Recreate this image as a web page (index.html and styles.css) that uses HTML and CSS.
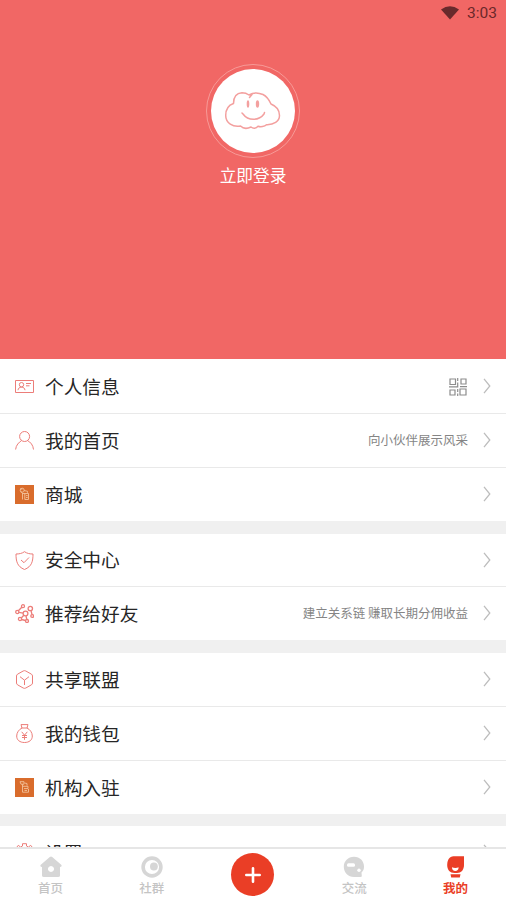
FILE: index.html
```html
<!DOCTYPE html>
<html lang="zh-CN">
<head>
<meta charset="utf-8">
<meta name="viewport" content="width=device-width, initial-scale=1">
<title>我的</title>
<link rel="stylesheet" href="styles.css">
</head>
<body>
<svg width="0" height="0" class="defs" aria-hidden="true">
  <symbol id="chevron" viewBox="0 0 8 16"><path d="M1 .8 6.8 8 1 15.2"/></symbol>
</svg>
<div class="app">
  <header class="hero">
    <div class="status">
      <svg width="20" height="14" viewBox="0 0 20 14"><path d="M1 3.400Q10-2.800 19 3.400L10 13.500Z" fill="#682a2c"/></svg>
      <span>3:03</span>
    </div>
    <div class="ring"><div class="avatar">
      <svg width="58" height="40" viewBox="0 0 58 40" fill="none" stroke="#f3a09f" stroke-width="1.500" stroke-linecap="round" stroke-linejoin="round">
        <path d="M9.500 12.500C9.500 5 13 2 18 1.700c3 0 5 .8 7 2.300 4-2.500 9-2.700 14-.5 4 2 6 5 8 9.500 5 2 8.500 6.500 8.500 11.500 0 6-6 9.500-13 9.200-2 2-6 2.500-8.500 1.500-2 2.500-5 2.500-7 .8-4 2-8 1.500-10.500-1C9 36.500 1.700 32 1.700 24.500 1.700 18 5 14 9.500 12.500ZM28 3.500l-2.500 3"/>
        <path d="M19 23c5 7 16 7 21 0M18 22l1 1M40.500 21.500 40 23"/>
        <g fill="#f3a09f" stroke="none"><ellipse cx="24" cy="13" rx="1.300" ry="3.700"/><ellipse cx="33.500" cy="13" rx="1.700" ry="3.700"/></g>
      </svg>
    </div></div>
    <div class="login">立即登录</div>
  </header>
  <main class="list">
    <section class="group">
      <div class="row">
        <svg class="icon" viewBox="0 0 19 19"><path d="M.5 3.500h18v12H.5ZM3 13.200c.2-2 1.500-3 3.500-3s3.300 1 3.500 3M11 6.500h5M11 8.800h3.500"/><circle cx="6.500" cy="7.700" r="2.200"/></svg>
        <span class="label">个人信息</span>
        <svg class="qr" width="18" height="18" viewBox="0 0 18 18"><path d="M1 1h5.500v5.500H1ZM12 1h5v5h-5ZM1 12h5v5H1ZM11 11h6v6h-6ZM8.700 0v3M8.700 4.500v4.300H0M8.700 11v3M8.700 15.500V18M18 8.700h-7"/></svg>
        <svg class="chev"><use href="#chevron"/></svg>
      </div>
      <div class="row">
        <svg class="icon" viewBox="0 0 19 19"><circle cx="9.600" cy="5.500" r="5"/><path d="M.6 18.500C1 14 4 11.300 6.500 9.600M12.500 9.600c3 1.500 5.600 4.400 6 8.900"/></svg>
        <span class="label">我的首页</span><span class="note">向小伙伴展示风采</span>
        <svg class="chev"><use href="#chevron"/></svg>
      </div>
      <div class="row">
        <svg class="icon shop" viewBox="0 0 19 19"><circle cx="7.200" cy="5.200" r="2"/><path d="M5 4h2.500M5.500 6.700l2 1.300v6.500M9 5.500l3.500.8v1.500M7.500 8.500h6v6H9.800v-6M11 10.600h1.700M11 12.500h1.700"/></svg>
        <span class="label">商城</span>
        <svg class="chev"><use href="#chevron"/></svg>
      </div>
    </section>
    <section class="group compact">
      <div class="row">
        <svg class="icon" viewBox="0 0 19 19"><path d="M9.500.7C7 2.500 4 3 1 3c0 7 1 12.500 8.500 15.500C17 15.500 18 10 18 3 15 3 12 2.500 9.500.7ZM6 9l3 2.700L14 6.500"/></svg>
        <span class="label">安全中心</span>
        <svg class="chev"><use href="#chevron"/></svg>
      </div>
      <div class="row">
        <svg class="icon dense" viewBox="0 0 19 19"><circle cx="10.500" cy="9.500" r="2.400"/><circle cx="2.300" cy="8" r="1.600"/><circle cx="8" cy="2.200" r="1.500"/><circle cx="15.300" cy="4.500" r="2.200"/><circle cx="17.200" cy="12" r="1.400"/><circle cx="5" cy="15" r="1.600"/><circle cx="12" cy="17" r="1.500"/><path d="m4 8.300 4 .8M3.300 6.800l3.500-3.600M16 6.700l1 3.800M6.300 14l2.500-2.700M6.500 15.500l4 1M11 12l.8 3.500"/></svg>
        <span class="label">推荐给好友</span><span class="note">建立关系链 赚取长期分佣收益</span>
        <svg class="chev"><use href="#chevron"/></svg>
      </div>
    </section>
    <section class="group">
      <div class="row">
        <svg class="icon" viewBox="0 0 19 19"><path d="M8.200 1Q9.500.3 10.800 1l5.700 3.200Q17.500 5 17.500 6v7q0 1-1 1.800L10.800 18q-1.300.7-2.600 0L2.500 14.800Q1.500 14 1.500 13V6q0-1 1-1.800ZM5 6.700l4.500 3.500L14 6.700M9.500 10.200V15"/></svg>
        <span class="label">共享联盟</span>
        <svg class="chev"><use href="#chevron"/></svg>
      </div>
      <div class="row">
        <svg class="icon" viewBox="0 0 19 19"><path d="M6 .6h7L12 4C15 5.500 17.300 8.500 17.300 12c0 4-3 6.500-7.800 6.500S1.700 16 1.700 12C1.700 8.500 4 5.500 7 4ZM6.500 4h6M6.700 7.800l2.800 3.400 2.800-3.400M9.500 11v4.800M7 11.500h5M7 13.500h5"/></svg>
        <span class="label">我的钱包</span>
        <svg class="chev"><use href="#chevron"/></svg>
      </div>
      <div class="row">
        <svg class="icon shop" viewBox="0 0 19 19"><path d="M5 3.700h4v2.500H6ZM7.500 6.200v8h6V11M9.500 5l2.500.5v2M7.500 8.300H13v2.300H9M9.500 12.500h2.500"/></svg>
        <span class="label">机构入驻</span>
        <svg class="chev"><use href="#chevron"/></svg>
      </div>
    </section>
    <section class="group">
      <div class="row">
        <svg class="icon" viewBox="0 0 19 19"><path d="M7.500 3V.7h4V3l2 1 2.200-1.700 2 2.500L16 7l.5 2h2v3h-2l-1 2.500 1.500 2-2 1.500-2-1-2 1v1h-4v-1l-2-1-2 1-2-2 1.500-2L2.500 12h-2V9h2L3 7 1.300 4.800l2-2.500L5.500 4Z"/><circle cx="9.500" cy="10" r="3"/></svg>
        <span class="label">设置</span>
        <svg class="chev"><use href="#chevron"/></svg>
      </div>
    </section>
  </main>
  <nav class="tabs">
    <div class="tab">
      <svg width="22" height="22" viewBox="0 0 22 22"><path fill-rule="evenodd" d="M9.800.9q1.200-1 2.400 0L21.500 9Q22 11 20 11v8.500q0 1.500-2 1.500H4q-2 0-2-1.500V11q-2 0-1.500-2ZM11 10a3 3 0 1 0 .01 0Z"/></svg>
      <span>首页</span>
    </div>
    <div class="tab">
      <svg width="22" height="22" viewBox="0 0 22 22"><circle cx="11" cy="11" r="8.900" fill="none" stroke="currentColor" stroke-width="3.600"/><circle cx="12.900" cy="10.500" r="3.900"/></svg>
      <span>社群</span>
    </div>
    <div class="tab"><div class="add"><svg width="16" height="16" viewBox="0 0 16 16"><path d="M8 1.300v13.400M1.300 8h13.400" stroke="#fff" stroke-width="2.600" stroke-linecap="round"/></svg></div></div>
    <div class="tab">
      <svg width="22" height="22" viewBox="0 0 22 22"><path d="M11 .7C17 .7 21 5 21 10.500c0 3-.7 4.500-2.500 6l.3 3.500q0 1-1.300 1H11C5 21 .8 16.500.8 10.800S5 .7 11 .7Z"/><rect x="4" y="7.300" width="8" height="3.400" rx="1.500" fill="#fff"/><circle cx="16" cy="14.200" r="1.700" fill="#fff"/></svg>
      <span>交流</span>
    </div>
    <div class="tab active">
      <svg width="22" height="22" viewBox="0 0 22 22"><path d="M9.500.3H20V9c0 5-3 8-7 8h-2.500c-4.500 0-7.300-3-7.300-8C3.200 4 5.500.3 9.500.3Z"/><path d="M8 11.200q1.500.8 3.300.8t3.300-.8c0 2.500-1.300 3.700-3.300 3.700S8 13.700 8 11.200Z" fill="#fff"/><path d="M6.500 18.200h10l-.7 3.300H7.200Z"/></svg>
      <span>我的</span>
    </div>
  </nav>
</div>
</body>
</html>
```

FILE: styles.css
```css
* { box-sizing: border-box; }
body {
  margin: 0;
  font-family: "Noto Sans CJK SC", sans-serif;
  color: #262626;
  background: #fff;
}
.defs { position: absolute; }
.app { display: flex; flex-direction: column; height: 900px; overflow: hidden; }

.hero {
  flex: none;
  height: 359px;
  background: #f16765;
  display: flex;
  flex-direction: column;
  align-items: center;
}
.status {
  align-self: stretch;
  height: 27px;
  padding-right: 9px;
  display: flex;
  justify-content: flex-end;
  align-items: center;
  gap: 7px;
  font: 400 15.500px/27px Roboto, sans-serif;
  color: #6b282a;
}
.status svg { margin-top: -2px; }
.ring {
  width: 94px;
  height: 94px;
  margin-top: 37px;
  padding: 4px;
  border: 1px solid #f79a97;
  border-radius: 50%;
}
.avatar {
  width: 84px;
  height: 84px;
  border-radius: 50%;
  background: #fff;
  display: flex;
  justify-content: center;
  align-items: center;
}
.login { margin-top: 5px; font-size: 16.700px; line-height: 24px; color: #fff; }

.list {
  flex: 1;
  min-height: 0;
  overflow: hidden;
  background: #f0f0f0;
  display: flex;
  flex-direction: column;
  gap: 13px;
}
.group { flex: none; background: #fff; }
.group:first-child { padding-top: 1px; }
.group:last-child { margin-top: -1px; }
.row {
  height: 54px;
  padding: 0 15px;
  display: flex;
  align-items: center;
  border-bottom: 1px solid #e9e9e9;
}
.row:last-child { height: 53px; border-bottom: 0; }
.compact .row { height: 53px; }
.icon { width: 19px; height: 19px; margin-right: 11px; fill: none; stroke: #ec7d79; stroke-width: 1; }
.icon.shop { background: #d96c2c; stroke: #f3c29c; stroke-width: .9; }
.icon.dense { stroke-width: 1.300; }
.label { flex: 1; font-size: 18.700px; line-height: 28px; margin-top: -2px; }
.note { font-size: 12.500px; line-height: 20px; color: #858585; margin: -1px 15px 0 0; }
.qr { margin-right: 16px; fill: none; stroke: #8c8c8c; stroke-width: 1.200; }
.chev { width: 8px; height: 16px; margin-top: -1px; fill: none; stroke: #bdbdbd; stroke-width: 1.300; }

.tabs {
  flex: none;
  height: 53px;
  border-top: 2px solid #e6e6e6;
  background: #fff;
  display: grid;
  grid-template-columns: repeat(5, 1fr);
}
.tab {
  display: flex;
  flex-direction: column;
  align-items: center;
  padding-top: 7px;
  font-size: 12.500px;
  font-weight: 500;
  line-height: 20px;
  color: #c4c4c4;
}
.tab svg { fill: #d6d6d6; color: #d6d6d6; }
.tab.active { color: #ea3e26; font-weight: 700; }
.tab.active svg { fill: #ea3e26; }
.add {
  width: 43px;
  height: 43px;
  margin-top: -3px;
  border-radius: 50%;
  background: #ea3e26;
  display: flex;
  justify-content: center;
  align-items: center;
}
```
